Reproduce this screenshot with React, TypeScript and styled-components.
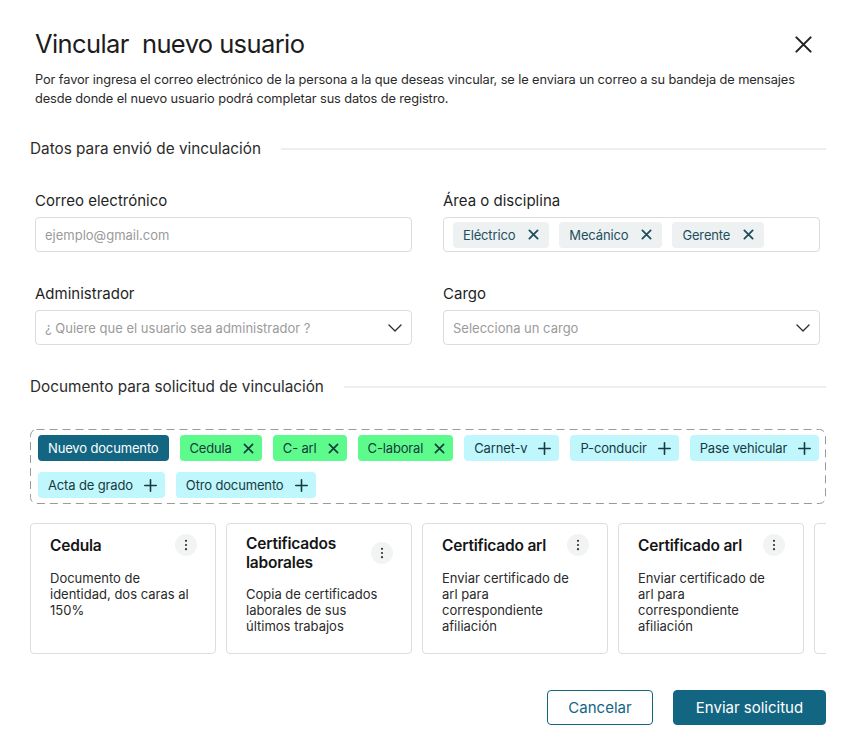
import { createGlobalStyle } from "styled-components";
import styled from "styled-components";

const GlobalStyle = createGlobalStyle`
  html, body {
    margin: 0;
    padding: 0;
    background: #ffffff;
  }
  * {
    box-sizing: border-box;
  }
  body {
    font-family: Inter, "Noto Sans", sans-serif;
    color: #1f1f1f;
  }
`;

const TEAL = "#136682";

type ChipVariant = "primary" | "added" | "optional" | "neutral";

interface ChipData {
  label: string;
  variant: ChipVariant;
  icon?: "close" | "plus";
}

interface DocCard {
  title: string;
  text: string;
}

const areas = ["Eléctrico", "Mecánico", "Gerente"];

const docChips: ChipData[] = [
  { label: "Nuevo documento", variant: "primary" },
  { label: "Cedula", variant: "added", icon: "close" },
  { label: "C- arl", variant: "added", icon: "close" },
  { label: "C-laboral", variant: "added", icon: "close" },
  { label: "Carnet-v", variant: "optional", icon: "plus" },
  { label: "P-conducir", variant: "optional", icon: "plus" },
  { label: "Pase vehicular", variant: "optional", icon: "plus" },
  { label: "Acta de grado", variant: "optional", icon: "plus" },
  { label: "Otro documento", variant: "optional", icon: "plus" },
];

const cards: DocCard[] = [
  { title: "Cedula", text: "Documento de identidad, dos caras al 150%" },
  { title: "Certificados laborales", text: "Copia de certificados laborales de sus últimos trabajos" },
  { title: "Certificado arl", text: "Enviar certificado de arl para correspondiente afiliación" },
  { title: "Certificado arl", text: "Enviar certificado de arl para correspondiente afiliación" },
];

function CloseIcon({ size = 12, stroke = 2 }: { size?: number; stroke?: number }) {
  return (
    <svg width={size} height={size} viewBox="0 0 12 12" fill="none">
      <path d="M1.5 1.5L10.5 10.5M10.5 1.5L1.5 10.5" stroke="currentColor" strokeWidth={stroke} strokeLinecap="round" />
    </svg>
  );
}

function PlusIcon() {
  return (
    <svg width="13" height="13" viewBox="0 0 13 13" fill="none">
      <path d="M6.5 0.8V12.2M0.8 6.5H12.2" stroke="currentColor" strokeWidth="1.6" strokeLinecap="round" />
    </svg>
  );
}

function ChevronIcon() {
  return (
    <svg width="14" height="8" viewBox="0 0 14 8" fill="none">
      <path d="M1 1L7 7L13 1" stroke="#2b2b2b" strokeWidth="1.3" strokeLinecap="round" strokeLinejoin="round" />
    </svg>
  );
}

function KebabIcon() {
  return (
    <svg width="4" height="12" viewBox="0 0 4 12" fill="#333">
      <circle cx="2" cy="1.8" r="1.1" />
      <circle cx="2" cy="6" r="1.1" />
      <circle cx="2" cy="10.2" r="1.1" />
    </svg>
  );
}

export default function App() {
  return (
    <>
      <GlobalStyle />
      <Modal>
        <Header>
          <Title>Vincular&nbsp; nuevo usuario</Title>
          <CloseButton aria-label="Cerrar">
            <CloseIcon size={19} stroke={1.3} />
          </CloseButton>
        </Header>
        <Description>
          Por favor ingresa el correo electrónico de la persona a la que deseas vincular, se le enviara un correo a su
          bandeja de mensajes desde donde el nuevo usuario podrá completar sus datos de registro.
        </Description>

        <SectionTitle>
          <span>Datos para envió de vinculación</span>
        </SectionTitle>

        <FieldGrid>
          <Field>
            <Label>Correo electrónico</Label>
            <InputBox>
              <Placeholder>ejemplo@gmail.com</Placeholder>
            </InputBox>
          </Field>
          <Field>
            <Label>Área o disciplina</Label>
            <InputBox $tags>
              {areas.map((a) => (
                <Chip key={a} $variant="neutral">
                  {a}
                  <ChipIcon>
                    <CloseIcon size={11} stroke={2} />
                  </ChipIcon>
                </Chip>
              ))}
            </InputBox>
          </Field>
          <Field>
            <Label>Administrador</Label>
            <InputBox>
              <Placeholder>¿ Quiere que el usuario sea administrador ?</Placeholder>
              <ChevronIcon />
            </InputBox>
          </Field>
          <Field>
            <Label>Cargo</Label>
            <InputBox>
              <Placeholder>Selecciona un cargo</Placeholder>
              <ChevronIcon />
            </InputBox>
          </Field>
        </FieldGrid>

        <SectionTitle $spaced>
          <span>Documento para solicitud de vinculación</span>
        </SectionTitle>

        <DropZone>
          <DashedFrame aria-hidden="true">
            <rect x="0.5" y="0.5" width="795" height="74" rx="6" ry="6" />
          </DashedFrame>
          {docChips.map((c) => (
            <Chip key={c.label} $variant={c.variant} $hasIcon={!!c.icon}>
              {c.label}
              {c.icon && (
                <ChipIcon>{c.icon === "close" ? <CloseIcon size={11} stroke={1.8} /> : <PlusIcon />}</ChipIcon>
              )}
            </Chip>
          ))}
        </DropZone>

        <CardRow>
          {cards.map((card, i) => (
            <Card key={i}>
              <CardHead>
                <CardTitle>{card.title}</CardTitle>
                <MenuButton>
                  <KebabIcon />
                </MenuButton>
              </CardHead>
              <CardText>{card.text}</CardText>
            </Card>
          ))}
          <Card aria-hidden="true" />
        </CardRow>

        <Footer>
          <Button $outline>Cancelar</Button>
          <Button>Enviar solicitud</Button>
        </Footer>
      </Modal>
    </>
  );
}

const Modal = styled.div`
  width: 856px;
  height: 756px;
  padding: 30px 30px 31px 30px;
  background: #ffffff;
  border-radius: 8px;
  display: flex;
  flex-direction: column;
`;

const Header = styled.div`
  display: flex;
  align-items: center;
  justify-content: space-between;
  padding: 0 13px 0 5px;
`;

const Title = styled.h1`
  margin: 0;
  font-size: 25.5px;
  line-height: 28px;
  font-weight: 400;
  color: #1c1c1c;
  letter-spacing: -0.6px;
`;

const CloseButton = styled.button`
  border: none;
  background: transparent;
  padding: 0;
  color: #222;
  display: flex;
  cursor: pointer;
`;

const Description = styled.p`
  margin: 13px 0 0 0;
  padding: 0 5px;
  font-size: 12.8px;
  line-height: 18.5px;
  color: #2a2a2a;
  letter-spacing: -0.1px;
`;

const SectionTitle = styled.div<{ $spaced?: boolean }>`
  display: flex;
  align-items: center;
  gap: 20px;
  margin-top: ${({ $spaced }) => ($spaced ? "32px" : "31px")};
  font-size: 15.3px;
  line-height: 20px;
  color: #2b2b2b;

  &::after {
    content: "";
    flex: 1;
    height: 2px;
    background: #eeeeee;
  }
`;

const FieldGrid = styled.div`
  display: grid;
  grid-template-columns: 377px 377px;
  column-gap: 31px;
  row-gap: 32px;
  padding: 0 5px;
  margin-top: 32px;
`;

const Field = styled.div`
  display: flex;
  flex-direction: column;
  gap: 6px;
`;

const Label = styled.label`
  font-size: 15px;
  line-height: 20px;
  color: #1f1f1f;
`;

const InputBox = styled.div<{ $tags?: boolean }>`
  height: 35px;
  border: 1px solid #dcdcdc;
  border-radius: 4px;
  display: flex;
  align-items: center;
  justify-content: ${({ $tags }) => ($tags ? "flex-start" : "space-between")};
  gap: 10px;
  padding: 0 9px;
`;

const Placeholder = styled.span`
  font-size: 13px;
  color: #9b9b9b;
`;

const chipColors: Record<ChipVariant, { bg: string; fg: string }> = {
  primary: { bg: TEAL, fg: "#ffffff" },
  added: { bg: "#5dfb8b", fg: "#173a3f" },
  optional: { bg: "#c0f7fc", fg: "#173a3f" },
  neutral: { bg: "#eef1f1", fg: "#1d4f5e" },
};

const Chip = styled.span<{ $variant: ChipVariant; $hasIcon?: boolean }>`
  position: relative;
  height: 26px;
  display: inline-flex;
  align-items: center;
  gap: ${({ $variant }) => ($variant === "neutral" ? "13px" : "11px")};
  padding: 0 ${({ $hasIcon }) => ($hasIcon ? "8px" : "10px")} 0 10px;
  border-radius: 4px;
  font-size: 13px;
  letter-spacing: -0.15px;
  white-space: nowrap;
  background: ${({ $variant }) => chipColors[$variant].bg};
  color: ${({ $variant }) => chipColors[$variant].fg};
`;

const ChipIcon = styled.span`
  display: inline-flex;
  align-items: center;
  color: inherit;
`;

const DropZone = styled.div`
  position: relative;
  height: 75px;
  margin-top: 32px;
  padding: 6px 4px 6px 8px;
  display: flex;
  flex-wrap: wrap;
  align-content: flex-start;
  column-gap: 11px;
  row-gap: 11px;
`;

const DashedFrame = styled.svg`
  position: absolute;
  inset: 0;
  width: 100%;
  height: 100%;
  pointer-events: none;

  rect {
    fill: none;
    stroke: #9a9a9a;
    stroke-width: 1;
    stroke-dasharray: 8 5;
  }
`;

const CardRow = styled.div`
  margin-top: 19px;
  display: flex;
  gap: 10px;
  overflow: hidden;
`;

const Card = styled.div`
  flex: 0 0 186px;
  height: 131px;
  border: 1px solid #dddddd;
  border-radius: 4px;
  padding: 10px 18px 12px 19px;
  display: flex;
  flex-direction: column;
  gap: 14px;
`;

const CardHead = styled.div`
  display: flex;
  align-items: center;
  justify-content: space-between;
  gap: 8px;
  min-height: 22px;
`;

const CardTitle = styled.h3`
  margin: 0;
  font-size: 15.5px;
  line-height: 19px;
  font-weight: 600;
  color: #161616;
  letter-spacing: -0.2px;
`;

const MenuButton = styled.button`
  flex: 0 0 22px;
  width: 22px;
  height: 22px;
  border-radius: 50%;
  border: none;
  background: #f2f4f4;
  display: flex;
  align-items: center;
  justify-content: center;
  padding: 0;
`;

const CardText = styled.p`
  margin: 0;
  max-width: 142px;
  font-size: 13px;
  line-height: 16px;
  color: #2a2a2a;
`;

const Footer = styled.div`
  margin-top: auto;
  display: flex;
  justify-content: flex-end;
  gap: 20px;
`;

const Button = styled.button<{ $outline?: boolean }>`
  height: 35px;
  padding: 0 20px;
  min-width: ${({ $outline }) => ($outline ? "106px" : "153px")};
  border-radius: 4px;
  font-family: inherit;
  font-size: 15px;
  cursor: pointer;
  border: 1px solid ${TEAL};
  background: ${({ $outline }) => ($outline ? "#ffffff" : TEAL)};
  color: ${({ $outline }) => ($outline ? TEAL : "#ffffff")};
`;
